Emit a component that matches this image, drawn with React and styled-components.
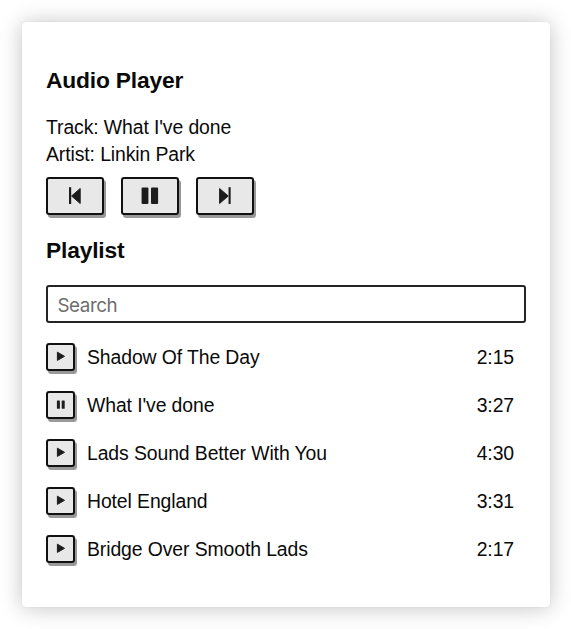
import React from "react";
import styled, { createGlobalStyle } from "styled-components";

const GlobalStyle = createGlobalStyle`
  *, *::before, *::after { box-sizing: border-box; }
  html, body { height: 100%; }
  body {
    margin: 0;
    overflow: hidden;
    background: #fff;
    color: #0a0a0a;
    font-family: "Liberation Sans", Arial, sans-serif;
    font-size: 19.4px;
    letter-spacing: -0.1px;
    line-height: 27px;
  }
`;

const Page = styled.main`
  width: 571px;
  height: 629px;
  padding: 22px 21px 22px 22px;
`;

const Card = styled.section`
  height: 585px;
  padding: 44px 24px 0;
  border-radius: 4px;
  background: #fff;
  box-shadow: 0 0 1px rgba(0, 0, 0, 0.16), 0 1px 22px rgba(0, 0, 0, 0.24);
`;

const Title = styled.h2`
  margin: 0;
  font-size: 22.8px;
  letter-spacing: -0.18px;
  line-height: 28px;
  font-weight: 700;
`;

const TrackInfo = styled.div`
  margin-top: 20px;
  p { margin: 0; }
`;

const Controls = styled.div`
  display: flex;
  gap: 17px;
  margin: 9px 0 21px;
`;

const Button = styled.button`
  display: flex;
  align-items: center;
  justify-content: center;
  flex: none;
  width: ${({ $small }) => ($small ? "29px" : "58px")};
  height: ${({ $small }) => ($small ? "28px" : "38px")};
  padding: 0;
  border: 2px solid #111;
  border-radius: 3px;
  background: #e8e8e8;
  box-shadow: 2px 3px 0 #999;
  color: #1d1d1d;
  svg { display: block; overflow: visible; }
`;

const SearchInput = styled.input`
  display: block;
  width: 480px;
  height: 38px;
  margin-top: 21px;
  padding: 2px 10px 0 9.5px;
  border: 2px solid #242424;
  border-radius: 3px;
  background: #fff;
  font-family: Inter, sans-serif;
  font-size: 18.8px;
  letter-spacing: -0.45px;
  outline: none;
  &::placeholder { color: #6d6d6d; opacity: 1; }
`;

const TrackList = styled.ul`
  display: grid;
  grid-auto-rows: 48px;
  margin: 10px 0 0;
  padding: 0;
  list-style: none;
`;

const TrackRow = styled.li`
  display: flex;
  align-items: center;
  gap: 12px;
  padding-right: 12px;
`;

const TrackName = styled.span`
  flex: 1;
`;

const shape = { fill: "currentColor", stroke: "currentColor", strokeWidth: 1, strokeLinejoin: "round" };

const PreviousIcon = () => (
  <svg width="20" height="20" viewBox="0 0 20 20" {...shape}>
    <path d="M15.2 2.5v15L6.6 10z" />
    <path d="M5.1 1.2V18" fill="none" strokeWidth="2.2" />
  </svg>
);

const NextIcon = () => (
  <svg width="20" height="20" viewBox="0 0 20 20" {...shape}>
    <path d="M4.6 2.5v15l8.6-7.5z" />
    <path d="M14.6 1.2V18" fill="none" strokeWidth="2.1" />
  </svg>
);

const PauseIcon = () => (
  <svg width="20" height="20" viewBox="0 0 20 20" fill="currentColor">
    <rect x="1.6" y="1.4" width="6.8" height="16.7" rx="1" />
    <rect x="11" y="1.4" width="7.1" height="16.7" rx="1" />
  </svg>
);

const SmallPauseIcon = () => (
  <svg width="10" height="10" viewBox="0 0 10 10" fill="currentColor">
    <rect x="0.9" y="0.5" width="3" height="8.2" rx="0.4" />
    <rect x="5.7" y="0.5" width="3" height="8.2" rx="0.4" />
  </svg>
);

const PlayIcon = () => (
  <svg width="10" height="10" viewBox="0 0 10 10" {...shape}>
    <path d="M1.4 0.2v8.2L8.5 4.3z" />
  </svg>
);

const tracks = [
  { name: "Shadow Of The Day", time: "2:15" },
  { name: "What I've done", time: "3:27", playing: true },
  { name: "Lads Sound Better With You", time: "4:30" },
  { name: "Hotel England", time: "3:31" },
  { name: "Bridge Over Smooth Lads", time: "2:17" },
];

export default function App() {
  return (
    <>
      <GlobalStyle />
      <Page>
        <Card>
          <Title>Audio Player</Title>
          <TrackInfo>
            <p>Track: What I've done</p>
            <p>Artist: Linkin Park</p>
          </TrackInfo>
          <Controls>
            <Button aria-label="Previous"><PreviousIcon /></Button>
            <Button aria-label="Pause"><PauseIcon /></Button>
            <Button aria-label="Next"><NextIcon /></Button>
          </Controls>
          <Title>Playlist</Title>
          <SearchInput placeholder="Search" aria-label="Search" />
          <TrackList>
            {tracks.map(({ name, time, playing }) => (
              <TrackRow key={name}>
                <Button $small aria-label={playing ? "Pause" : "Play"}>
                  {playing ? <SmallPauseIcon /> : <PlayIcon />}
                </Button>
                <TrackName>{name}</TrackName>
                <span>{time}</span>
              </TrackRow>
            ))}
          </TrackList>
        </Card>
      </Page>
    </>
  );
}
